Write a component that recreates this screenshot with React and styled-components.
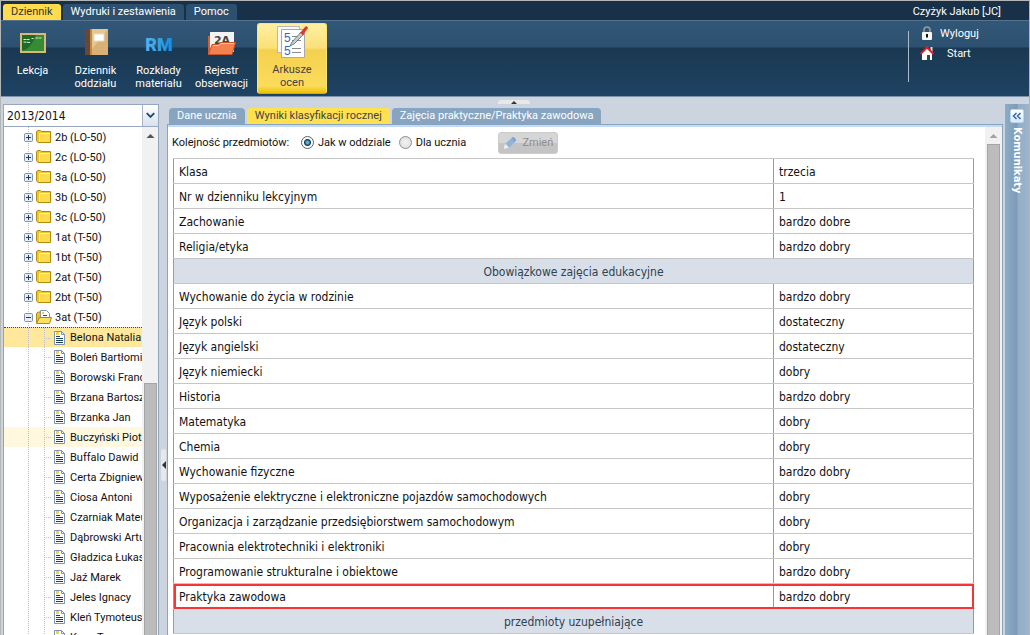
import React, { useState } from "react";
import styled, { createGlobalStyle, css } from "styled-components";

const GlobalStyle = createGlobalStyle`
  * {
    box-sizing: border-box;
  }

  body {
    margin: 0;
    background: #cbd4df;
    font-family: Tahoma, Roboto, "DejaVu Sans Condensed", sans-serif;
    font-size: 11px;
    color: #111;
  }

  button,
  select,
  input {
    font: inherit;
    margin: 0;
  }
`;

const Page = styled.div`
  height: 100vh;
  display: flex;
  flex-direction: column;
  overflow: hidden;
  border: 1px solid #b4b6b6;
  border-bottom: 0;
`;

const TopBar = styled.header`
  display: flex;
  justify-content: space-between;
  height: 19px;
  flex: none;
  padding: 0 28px 0 2px;
  background: #183048;
  color: #fff;
`;

const TopTabs = styled.nav`
  display: flex;
  gap: 2px;
  padding-top: 3px;
`;

const TopTab = styled.button`
  height: 16px;
  padding: 0 8px;
  border: 0;
  border-radius: 3px 3px 0 0;
  line-height: 16px;
  color: ${(props) => (props.$active ? "#333" : "#fff")};
  background: ${(props) => (props.$active ? "#ffdc4e" : "#2d506f")};
`;

const User = styled.span`
  line-height: 22px;
`;

const Ribbon = styled.div`
  display: flex;
  justify-content: space-between;
  height: 77px;
  flex: none;
  padding: 2px 0;
  border-top: 1px solid #56728d;
  border-bottom: 1px solid #7e93ac;
  background: linear-gradient(#315778 0, #2d5170 26px, #1a3852 27px, #1e4363 100%);
`;

const RibbonItems = styled.div`
  display: flex;
`;

const RibbonButton = styled.button`
  display: flex;
  flex-direction: column;
  align-items: center;
  width: 63px;
  height: 71px;
  padding: 2px 0 0;
  border: 0;
  border-radius: 3px;
  line-height: 13px;
  color: #fff;
  background: none;

  svg {
    flex: none;
    margin-bottom: 3px;
  }

  ${(props) =>
    props.$active &&
    css`
      width: 70px;
      margin-left: 4px;
      padding: 0 10px;
      border: 1px solid #ffe471;
      border-bottom-color: #dba800;
      color: #444;
      background: linear-gradient(#fff0a0 0, #fbe07a 24px, #f5d04e 26px, #fbdc5c 62px, #efc000 100%);
    `}
`;

const Session = styled.div`
  width: 121px;
  height: 51px;
  margin-top: 8px;
  border-left: 1px solid #a9bac8;
`;

const SessionLink = styled.a`
  display: flex;
  align-items: center;
  gap: ${(props) => props.$gap}px;
  height: 20px;
  padding-left: 10px;
  color: #fff;
  text-decoration: none;

  &:first-child {
    margin-top: -8px;
  }
`;

const Workspace = styled.main`
  flex: 1;
  min-height: 0;
  display: flex;
`;

const Sidebar = styled.aside`
  width: 156px;
  flex: none;
  display: flex;
  flex-direction: column;
  margin: 7px 0 0 2px;
`;

const YearBox = styled.div`
  display: flex;
  height: 23px;
  border: 1px solid #97a8be;
  background: #fff;

  select {
    flex: 1;
    min-width: 0;
    appearance: none;
    padding: 0 3px;
    border: 0;
    background: none;
    color: #111;
    font-family: Tahoma, "DejaVu Sans Condensed", sans-serif;
    font-size: 12px;
  }

  svg {
    flex: none;
    border-left: 1px solid #a8b5c6;
    background: linear-gradient(#fff, #d5e2ef);
  }
`;

const TreeBox = styled.div`
  flex: 1;
  min-height: 0;
  display: flex;
  border-left: 1px solid #90a4bc;
  border-right: 1px solid #90a4bc;
  background: #fff;
`;

const Tree = styled.ul`
  flex: 1;
  min-width: 0;
  margin: 0;
  padding: 0;
  overflow: hidden;
  list-style: none;
`;

const dots = "repeating-linear-gradient(#bfbfbf 0 1px, transparent 1px 2px)";
const dashes = "repeating-linear-gradient(90deg, #bfbfbf 0 1px, transparent 1px 2px)";

const TreeRow = styled.li`
  display: flex;
  align-items: center;
  gap: 3px;
  height: 20px;
  padding-left: ${(props) => (props.$leaf ? 50 : 20)}px;
  white-space: nowrap;
  background: ${dots} 24px 0 / 1px 100% no-repeat;

  ${(props) =>
    props.$leaf &&
    css`
      gap: 4px;
      background: ${dots} 24px 0 / 1px 100% no-repeat,
        ${dots} 40px 0 / 1px 100% no-repeat,
        ${dashes} 42px 10px / 6px 1px no-repeat,
        ${props.$tone || "#fff"};
    `}

  ${(props) => props.$selected && "border-top: 1px dotted #444;"}

  svg {
    flex: none;
  }
`;

const Scrollbar = styled.div`
  width: ${(props) => props.$width}px;
  flex: none;
  display: flex;
  flex-direction: column;
  align-items: center;
  background: #f1f1f1;

  svg {
    flex: none;
  }
`;

const Thumb = styled.div`
  flex: 1;
  width: 13px;
  margin-top: ${(props) => props.$top || 0};
  border: 1px solid #a5a5a5;
  border-bottom: 0;
  background: #bcbcbc;
`;

const Splitter = styled.div`
  width: 8px;
  flex: none;
  padding-top: 352px;
`;

const SplitHandle = styled.button`
  display: block;
  width: 5px;
  height: 32px;
  margin: 0 auto;
  padding: 0;
  border: 0;
  border-radius: 3px;
  background: #e8e8e8;
`;

const Content = styled.section`
  flex: 1;
  min-width: 0;
  display: flex;
  flex-direction: column;
`;

const TopHandle = styled.button`
  width: 32px;
  height: 4px;
  flex: none;
  margin: 3px auto 4px 331px;
  padding: 0;
  border: 0;
  border-radius: 3px 3px 0 0;
  background: #e8e8e8;

  svg {
    display: block;
    margin: 0 auto;
  }
`;

const PanelTabs = styled.div`
  display: flex;
  gap: 2px;
  height: 16px;
  flex: none;
  padding-left: 2px;
`;

const PanelTab = styled.button`
  padding: 0 8px;
  border: 0;
  border-radius: 4px 4px 0 0;
  line-height: 16px;
  color: ${(props) => (props.$active ? "#444" : "#fff")};
  background: ${(props) => (props.$active ? "#ffe04f" : "#87a4c0")};
`;

const Panel = styled.div`
  flex: 1;
  min-height: 0;
  display: flex;
  border: 1px solid #87a3c0;
  border-bottom: 0;
  background: #fff;
`;

const PanelBody = styled.div`
  flex: 1;
  min-width: 0;
  padding: 0 11px 0 5px;
  overflow: hidden;
`;

const PanelColumn = styled.div`
  flex: 1;
  min-width: 0;
  display: flex;
  border-top: 2px solid #c3dbf3;
`;

const Toolbar = styled.form`
  display: flex;
  align-items: center;
  height: 31px;
`;

const Label = styled.span`
  width: 129px;
  margin-left: -1px;
`;

const Radio = styled.label`
  display: flex;
  align-items: center;
  gap: 4px;
  margin-right: 8px;

  input {
    appearance: none;
    width: 13px;
    height: 13px;
    border: 1px solid #8b8f94;
    border-radius: 50%;
    background: radial-gradient(#f4f4f4, #d8d8d8);
  }

  input:checked {
    border-color: #555f69;
    background: radial-gradient(circle, #62b5e0 0 1px, #12384f 3px, #fff 4px);
  }
`;

const ChangeButton = styled.button`
  display: flex;
  align-items: center;
  gap: 4px;
  width: 60px;
  height: 22px;
  margin-left: 24px;
  padding: 0 4px;
  border: 1px solid #ccc;
  border-radius: 3px;
  color: #8c8c8c;
  background: linear-gradient(#d6d6d6 50%, #c4c4c4 50%);
`;

const Grades = styled.table`
  width: 100%;
  table-layout: fixed;
  border-collapse: collapse;
  border: 1px solid #8c9db3;
  font-family: Tahoma, "DejaVu Sans Condensed", sans-serif;
  font-size: 12px;

  td,
  th {
    height: 25px;
    padding: 1px 5px 0;
    border-top: 1px solid #c6c6c6;
    border-bottom: 1px solid #c6c6c6;
    font-weight: normal;
    text-align: left;
  }

  td {
    border-left: 1px solid #8c9db3;
  }

  .group {
    text-align: center;
    color: #2e4250;
    background: #d8dfe8;
  }

  .marked {
    outline: 2px solid #f93434;
    outline-offset: -2px;
  }
`;

const Messages = styled.aside`
  width: 24px;
  flex: none;
  display: flex;
  flex-direction: column;
  align-items: center;
  gap: 4px;
  margin: 7px 0 0 2px;
  padding-top: 5px;
  background: linear-gradient(90deg, #8fabc4, #7c9bb8 12px, #93aec6 13px, #9bb4ca);
`;

const ExpandButton = styled.button`
  width: 14px;
  height: 14px;
  padding: 0;
  border: 1px solid #b9d6f5;
  border-radius: 2px;
  background: linear-gradient(#fff, #d8e9fa);

  svg {
    display: block;
  }
`;

const MessagesTitle = styled.span`
  writing-mode: vertical-rl;
  font-family: Tahoma, "DejaVu Sans Condensed", sans-serif;
  font-weight: bold;
  color: #fff;
`;

const Arrow = ({ color = "#555" }) => (
  <svg width="17" height="17" viewBox="0 0 17 17">
    <path d="M4.500 11L8.500 7L12.500 11Z" fill={color} />
  </svg>
);

const BoardIcon = () => (
  <svg width="28" height="36" viewBox="0 0 28 36">
    <rect x="1" y="8" width="26" height="20" fill="#dcb877" />
    <rect x="3" y="10" width="22" height="16" fill="#1f6b26" />
    <path d="M3 26Q12 24 17 10H25V26Z" fill="#3f9a3b" opacity=".7" />
    <path d="M4.500 14.500h6m2 -1h2m2 -.5h6M4.500 17l7 .500" stroke="#dfeedd" fill="none" strokeDasharray="3 .6" />
  </svg>
);

const BookIcon = () => (
  <svg width="28" height="36" viewBox="0 0 28 36">
    <rect x="3" y="4" width="23" height="26" fill="#d9b176" />
    <rect x="3" y="4" width="5" height="26" fill="#6b4632" />
    <path d="M8 4h2v26H8Z" fill="#c08a42" />
    <path d="M10 4h16L10 24Z" fill="#e6c78f" />
    <rect x="12" y="9" width="10" height="7" fill="#fff" stroke="#e3dccf" />
  </svg>
);

const RmIcon = () => (
  <svg width="28" height="36" viewBox="0 0 28 36">
    <defs>
      <linearGradient id="rm">
        <stop offset="0" stopColor="#58b4ea" />
        <stop offset="1" stopColor="#0f8fe0" />
      </linearGradient>
    </defs>
    <text x="14" y="26" textAnchor="middle" fontFamily="Roboto, sans-serif" fontSize="18" fontWeight="900" fill="url(#rm)">
      RM
    </text>
  </svg>
);

const RegisterIcon = () => (
  <svg width="28" height="36" viewBox="0 0 28 36">
    <path d="M0 11h4v19H0Z" fill="#d0603a" />
    <rect x="2" y="7" width="24" height="20" fill="#f3f3f3" />
    <text x="14" y="19" textAnchor="middle" fontFamily="DejaVu Sans, sans-serif" fontSize="11" fontWeight="bold" fill="#444">
      2A
    </text>
    <path d="M.5 29.500L4 19.500H10L12.500 17.500H27.500L24 29.500Z" fill="#f4814f" stroke="#c9552b" />
    <path d="M5 20.500h6l2 -2h13" stroke="#ffc1a4" fill="none" />
  </svg>
);

const SheetIcon = () => (
  <svg width="32" height="36" viewBox="0 0 32 36">
    <path d="M1.500 2.500h22v26H1.500Z" fill="#f7f7f7" stroke="#b8b8b8" />
    <path d="M5.500 5.500h23v28H5.500Z" fill="#fff" stroke="#a9a9a9" />
    <text x="8" y="18" fontFamily="Liberation Sans, sans-serif" fontSize="12" fill="#2f69c9">5</text>
    <text x="8" y="31" fontFamily="Liberation Sans, sans-serif" fontSize="12" fill="#2f69c9">5</text>
    <path d="M16 12.500h9M16 16.500h9M16 24.500h9M16 28.500h9" stroke="#8a8a8a" />
    <path d="M14 22L16 18L25 8L28 10L18 20Z" fill="#c4ccd2" stroke="#555" strokeWidth=".7" />
    <path d="M24 9L29 3Q31 1 32 4L27 11Z" fill="#d93a2c" />
  </svg>
);

const LockIcon = () => (
  <svg width="16" height="16" viewBox="0 0 16 16">
    <path d="M5 8V5Q5 2 8 2T11 5V8" fill="none" stroke="#999" strokeWidth="1.600" />
    <rect x="3" y="7" width="10" height="8" rx="1" fill="#f5f5f5" />
    <path d="M8 9v3.500" stroke="#111" strokeWidth="2" />
  </svg>
);

const HomeIcon = () => (
  <svg width="16" height="16" viewBox="0 0 16 16">
    <path d="M3 8L8 3L13 8V15H3Z" fill="#fff" />
    <path d="M8 10h3v5H8Z" fill="#345" />
    <path d="M11.500 2h2v5h-2Z" fill="#ddd" />
    <path d="M1.500 9L8 2.500L14.500 9" fill="none" stroke="#df1f1f" strokeWidth="2" />
  </svg>
);

const Toggle = ({ open }) => (
  <svg width="9" height="9" viewBox="0 0 9 9">
    <rect x=".5" y=".5" width="8" height="8" rx="1" fill="#e6edf5" stroke="#7c91ad" />
    <path d={open ? "M2 4.500h5" : "M2 4.500h5M4.500 2v5"} stroke="#1d3c60" />
  </svg>
);

const Folder = ({ open }) => (
  <svg width="16" height="16" viewBox="0 0 16 16">
    {open ? (
      <>
        <path d="M.5 13.500V4.500L2 3H5V13.500Z" fill="#ecc224" stroke="#b18a0e" />
        <path d="M4.500 1.500h6l3 3v5h-9Z" fill="#fff" stroke="#8297ae" />
        <path d="M6 3h2v2H6Z" fill="#f3cf4a" />
        <path d="M7 6.500h4" stroke="#29496d" />
        <path d="M.5 14.500L3.500 8.500H15.500L13.500 14.500Z" fill="#fbe063" stroke="#b18a0e" />
      </>
    ) : (
      <>
        <path d="M.5 11.500V2.500L2 1.500H4.500L5.500 2.500H14.500V13.500H2Z" fill="#efc62c" stroke="#b18a0e" />
        <path d="M4 5H14V13H4Z" fill="#fcdc4c" />
        <path d="M3.500 13V4.500H14" stroke="#fff3ad" fill="none" />
      </>
    )}
  </svg>
);

const Doc = () => (
  <svg width="12" height="16" viewBox="0 0 12 16">
    <path d="M.5 1.500H7.500L10.500 4.500V14.500H.5Z" fill="#fff" stroke="#7d94ae" />
    <path d="M7.500 1.500V4.500H10.500" fill="none" stroke="#7d94ae" />
    <path d="M2 2h3v3H2Z" fill="#f3cf4a" />
    <path d="M2 6.500h4M2 8.500h7M2 10.500h7M2 12.500h7" stroke="#1f3d5d" />
  </svg>
);

const Pencil = () => (
  <svg width="16" height="16" viewBox="0 0 16 16">
    <path d="M1 14L2 9L6 13Z" fill="#eef2f6" />
    <path d="M3 8L10 2L14 5L7 13Z" fill="#8fb4dd" />
    <path d="M9 3L10 2Q12 1 14 5L12 7Z" fill="#7ba5d5" />
  </svg>
);

const modules = [
  { name: "Lekcja", icon: <BoardIcon /> },
  { name: "Dziennik oddziału", icon: <BookIcon /> },
  { name: "Rozkłady materiału", icon: <RmIcon /> },
  { name: "Rejestr obserwacji", icon: <RegisterIcon /> },
  { name: "Arkusze ocen", icon: <SheetIcon />, active: true },
];

const classes = [
  "2b (LO-50)",
  "2c (LO-50)",
  "3a (LO-50)",
  "3b (LO-50)",
  "3c (LO-50)",
  "1at (T-50)",
  "1bt (T-50)",
  "2at (T-50)",
  "2bt (T-50)",
  "3at (T-50)",
];

const students = [
  "Belona Natalia",
  "Boleń Bartłomiej",
  "Borowski Franciszek",
  "Brzana Bartosz",
  "Brzanka Jan",
  "Buczyński Piotr",
  "Buffalo Dawid",
  "Certa Zbigniew",
  "Ciosa Antoni",
  "Czarniak Mateusz",
  "Dąbrowski Artur",
  "Gładzica Łukasz",
  "Jaź Marek",
  "Jeles Ignacy",
  "Kleń Tymoteusz",
  "Koza Tomasz",
];

const tones = { "Belona Natalia": "#ffe79b", "Buczyński Piotr": "#fff8df" };

const grades = [
  ["Klasa", "trzecia"],
  ["Nr w dzienniku lekcyjnym", "1"],
  ["Zachowanie", "bardzo dobre"],
  ["Religia/etyka", "bardzo dobry"],
  ["Obowiązkowe zajęcia edukacyjne"],
  ["Wychowanie do życia w rodzinie", "bardzo dobry"],
  ["Język polski", "dostateczny"],
  ["Język angielski", "dostateczny"],
  ["Język niemiecki", "dobry"],
  ["Historia", "bardzo dobry"],
  ["Matematyka", "dobry"],
  ["Chemia", "dobry"],
  ["Wychowanie fizyczne", "bardzo dobry"],
  ["Wyposażenie elektryczne i elektroniczne pojazdów samochodowych", "dobry"],
  ["Organizacja i zarządzanie przedsiębiorstwem samochodowym", "dobry"],
  ["Pracownia elektrotechniki i elektroniki", "dobry"],
  ["Programowanie strukturalne i obiektowe", "bardzo dobry"],
  ["Praktyka zawodowa", "bardzo dobry"],
  ["przedmioty uzupełniające"],
];

export default function App() {
  const [order, setOrder] = useState("class");

  return (
    <Page>
      <GlobalStyle />
      <TopBar>
        <TopTabs>
          <TopTab $active>Dziennik</TopTab>
          <TopTab>Wydruki i zestawienia</TopTab>
          <TopTab>Pomoc</TopTab>
        </TopTabs>
        <User>Czyżyk Jakub [JC]</User>
      </TopBar>

      <Ribbon>
        <RibbonItems>
          {modules.map((item) => (
            <RibbonButton key={item.name} $active={item.active}>
              {item.icon}
              {item.name}
            </RibbonButton>
          ))}
        </RibbonItems>
        <Session>
          <SessionLink href="#logout" $gap={5}>
            <LockIcon />
            Wyloguj
          </SessionLink>
          <SessionLink href="#start" $gap={12}>
            <HomeIcon />
            Start
          </SessionLink>
        </Session>
      </Ribbon>

      <Workspace>
        <Sidebar>
          <YearBox>
            <select aria-label="Rok szkolny">
              <option>2013/2014</option>
            </select>
            <svg width="16" height="21" viewBox="0 0 16 21">
              <path d="M4 8L8 12L12 8" fill="none" stroke="#1c4a7c" strokeWidth="2" />
            </svg>
          </YearBox>
          <TreeBox>
            <Tree>
              {classes.map((name) => (
                <TreeRow key={name}>
                  <Toggle open={name === "3at (T-50)"} />
                  <Folder open={name === "3at (T-50)"} />
                  {name}
                </TreeRow>
              ))}
              {students.map((name, i) => (
                <TreeRow key={name} $leaf $tone={tones[name]} $selected={i === 0}>
                  <Doc />
                  {name}
                </TreeRow>
              ))}
            </Tree>
            <Scrollbar $width={16}>
              <Arrow />
              <Thumb $top="239px" />
            </Scrollbar>
          </TreeBox>
        </Sidebar>

        <Splitter>
          <SplitHandle aria-label="Zwiń drzewo">
            <svg width="5" height="8" viewBox="0 0 5 8">
              <path d="M5 0V8L1 4Z" fill="#333" />
            </svg>
          </SplitHandle>
        </Splitter>

        <Content>
          <TopHandle aria-label="Zwiń wstążkę">
            <svg width="8" height="4" viewBox="0 0 8 4">
              <path d="M1 4H7L4 1Z" fill="#333" />
            </svg>
          </TopHandle>
          <PanelTabs>
            <PanelTab>Dane ucznia</PanelTab>
            <PanelTab $active>Wyniki klasyfikacji rocznej</PanelTab>
            <PanelTab>Zajęcia praktyczne/Praktyka zawodowa</PanelTab>
          </PanelTabs>
          <Panel>
            <PanelColumn>
              <PanelBody>
                <Toolbar>
                  <Label>Kolejność przedmiotów:</Label>
                  <Radio>
                    <input type="radio" name="order" checked={order === "class"} onChange={() => setOrder("class")} />
                    Jak w oddziale
                  </Radio>
                  <Radio>
                    <input type="radio" name="order" checked={order === "student"} onChange={() => setOrder("student")} />
                    Dla ucznia
                  </Radio>
                  <ChangeButton type="button" disabled>
                    <Pencil />
                    Zmień
                  </ChangeButton>
                </Toolbar>
                <Grades>
                  <colgroup>
                    <col />
                    <col width="25%" />
                  </colgroup>
                  <tbody>
                    {grades.map(([subject, grade]) =>
                      grade ? (
                        <tr key={subject} className={subject === "Praktyka zawodowa" ? "marked" : undefined}>
                          <th scope="row">{subject}</th>
                          <td>{grade}</td>
                        </tr>
                      ) : (
                        <tr key={subject}>
                          <th className="group" colSpan={2}>
                            {subject}
                          </th>
                        </tr>
                      )
                    )}
                  </tbody>
                </Grades>
              </PanelBody>
              <Scrollbar $width={17}>
                <Arrow color="#a3a3a3" />
                <Thumb />
              </Scrollbar>
            </PanelColumn>
          </Panel>
        </Content>

        <Messages>
          <ExpandButton aria-label="Rozwiń">
            <svg width="12" height="12" viewBox="0 0 12 12">
              <path d="M5.500 3L2.500 6L5.500 9M9.500 3L6.500 6L9.500 9" fill="none" stroke="#2f6ca8" strokeWidth="1.500" />
            </svg>
          </ExpandButton>
          <MessagesTitle>Komunikaty</MessagesTitle>
        </Messages>
      </Workspace>
    </Page>
  );
}
